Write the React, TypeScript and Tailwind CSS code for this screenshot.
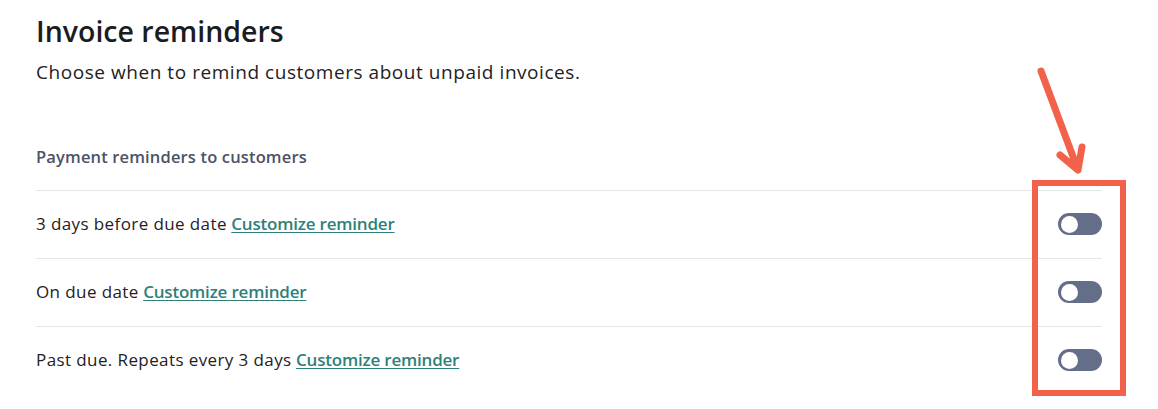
import React from 'react';

const rows = [
  'On due date',
  'Past due. Repeats every 3 days',
];

function Toggle() {
  return (
    <button
      type="button"
      aria-pressed="false"
      className="flex h-[22px] w-[44px] shrink-0 items-center rounded-full bg-[#646e89] px-[3px]"
    >
      <span className="block h-[17px] w-[17px] rounded-full bg-white" />
    </button>
  );
}

function ReminderRow({ label }: { label: string }) {
  return (
    <div className="flex h-[68px] items-center justify-between border-t border-[#e3e6eb]">
      <p className="text-[17px] text-[#1f2123]">
        <span className="tracking-[0.4px]">{label}</span>{' '}
        <a href="#" className="font-semibold tracking-[-0.2px] text-[#2f7f7a] underline underline-offset-2">
          Customize reminder
        </a>
      </p>
      <Toggle />
    </div>
  );
}

export default function App() {
  return (
    <div className="relative min-h-[409px] bg-white font-['Open_Sans',sans-serif]">
      <div className="w-[1102px] pl-9 pt-[13px]">
        <h1 className="text-[28.5px] font-semibold leading-9 text-[#1b1c1e]">Invoice reminders</h1>
        <p className="mt-[9px] text-[19px] tracking-[0.55px] text-[#1f2123]">
          Choose when to remind customers about unpaid invoices.
        </p>

        <h2 className="mt-[58px] h-[45px] text-[16.5px] font-semibold tracking-[0.15px] text-[#4b5366]">
          Payment reminders to customers
        </h2>

        <div>
          <ReminderRow label="3 days before due date" />
          {rows.map((r) => (
            <ReminderRow key={r} label={r} />
          ))}
        </div>
      </div>

      {/* annotation: highlight box */}
      <div className="pointer-events-none absolute left-[1032px] top-[180px] h-[216px] w-[94px] border-[6px] border-[#f2614a]" />

      {/* annotation: arrow */}
      <svg
        className="pointer-events-none absolute left-[1030px] top-[60px]"
        width="70"
        height="120"
        viewBox="0 0 70 120"
        fill="none"
      >
        <path
          d="M11 11 L48 110 M30 95 L48 110 L52 87"
          stroke="#f2614a"
          strokeWidth="7"
          strokeLinecap="round"
          strokeLinejoin="round"
        />
      </svg>
    </div>
  );
}
